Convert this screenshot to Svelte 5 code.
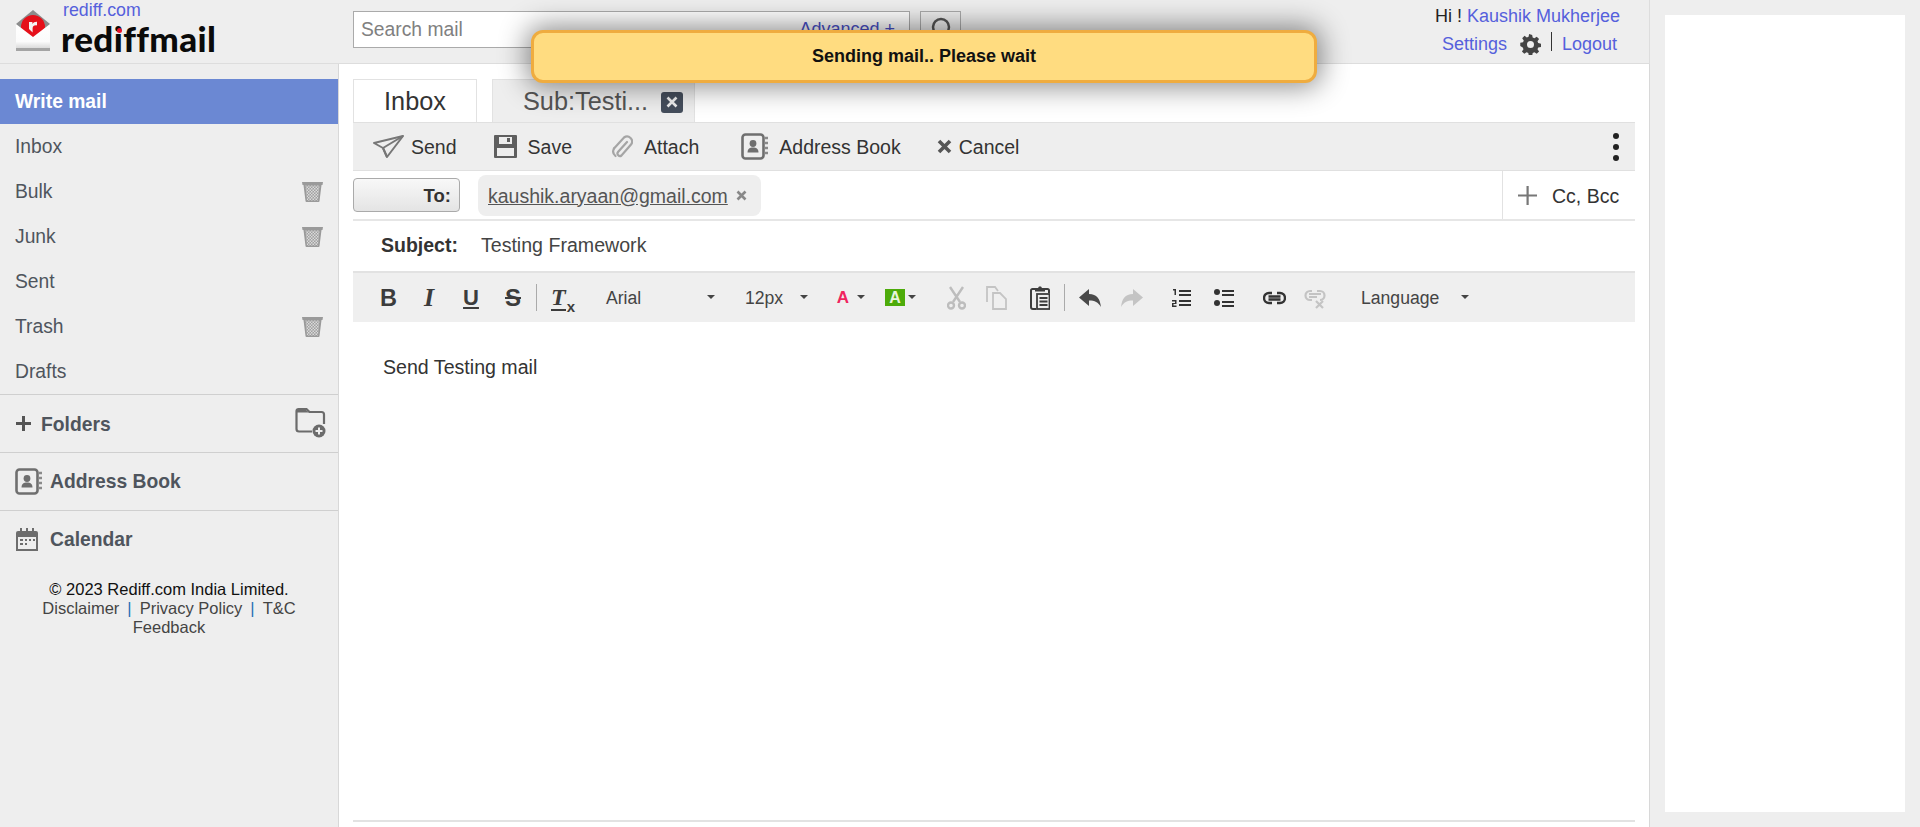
<script>
  const folders = [
    { name: 'Inbox', trash: false },
    { name: 'Bulk', trash: true },
    { name: 'Junk', trash: true },
    { name: 'Sent', trash: false },
    { name: 'Trash', trash: true },
    { name: 'Drafts', trash: false }
  ];
</script>

{#snippet bookIcon(w, h)}
  <svg width={w} height={h} viewBox="0 0 27 27" fill="none">
    <rect x="1.5" y="1.5" width="21" height="24" rx="3" stroke="#6f6f6f" stroke-width="2.6" fill="#eee"/>
    <circle cx="12" cy="10.5" r="3.4" fill="#6f6f6f"/>
    <path d="M6.5 19.5c0-4 2.5-5 5.5-5s5.500 1 5.500 5z" fill="#6f6f6f"/>
    <path d="M24 5h3M24 10h3M24 15h3M24 20h3" stroke="#8a8a8a" stroke-width="2.600"/>
  </svg>
{/snippet}

{#snippet trashIcon()}
  <svg class="trash" width="21" height="20" viewBox="0 0 21 20">
    <defs>
      <pattern id="mesh" width="3" height="3" patternUnits="userSpaceOnUse">
        <rect width="3" height="3" fill="#a0a0a0"/>
        <rect width="1.500" height="1.500" fill="#dadada"/>
        <rect x="1.500" y="1.500" width="1.500" height="1.500" fill="#dadada"/>
      </pattern>
    </defs>
    <path d="M0 0h21l-.5 3h-1L17.500 19a1 1 0 0 1-1 1H4.500a1 1 0 0 1-1-1L1.500 3h-1z" fill="#9a9a9a"/>
    <path d="M3.500 3.500h14L16 18.500H5z" fill="url(#mesh)"/>
  </svg>
{/snippet}

<div class="page">
  <div class="left">
    <header class="header">
      <div class="brand">
        <svg class="envelope" width="36" height="42" viewBox="0 0 36 42">
          <defs>
            <linearGradient id="env" x1="0" y1="0" x2="0" y2="1">
              <stop offset="0" stop-color="#ffffff"/>
              <stop offset="0.7" stop-color="#fbfbfb"/>
              <stop offset="1" stop-color="#d6d6d6"/>
            </linearGradient>
          </defs>
          <path d="M18 1L35 15v4H1v-4z" fill="#8c8c8c"/>
          <circle cx="18" cy="18" r="12" fill="#e5101a"/>
          <path d="M1 15l17 13 17-13v25H1z" fill="url(#env)"/>
          <path d="M14 13h3.400v2c1-1.600 2.400-2.300 4.600-2.200v3.600c-2.800-.3-4.400.6-4.400 3v4.100L14 20z" fill="#f4f4f4"/>
          <path d="M1 39h34v3H1z" fill="#a4a4a4"/>
        </svg>
        <div class="brand-text">
          <a class="rediff-link">rediff.com</a>
          <div class="logo-word">rediffmail<i class="logo-dot"></i></div>
        </div>
      </div>
      <div class="search">
        <div class="search-box">
          <span class="placeholder">Search mail</span>
          <a class="advanced">Advanced +</a>
        </div>
        <div class="search-btn">
          <svg width="26" height="26" viewBox="0 0 26 26" fill="none"><circle cx="13" cy="11" r="8" stroke="#555" stroke-width="2.500"/><path d="M8 19l-3 5" stroke="#555" stroke-width="3"/></svg>
        </div>
      </div>
      <div class="user">
        <div class="user-top">Hi ! <a>Kaushik Mukherjee</a></div>
        <div class="user-links">
          <a>Settings</a>
          <svg class="gear" width="21" height="21" viewBox="0 0 24 24"><path fill="#444" fill-rule="evenodd" d="M13.900 1l.6 3.100 2 .8 2.600-1.800 2.700 2.700-1.800 2.600.8 2 3.200.6v3.800l-3.200.6-.8 2 1.800 2.600-2.700 2.700-2.600-1.800-2 .8-.6 3.300h-3.800l-.6-3.300-2-.8-2.600 1.800-2.700-2.700 1.800-2.600-.8-2L.3 13.800V10l3.200-.6.800-2-1.800-2.600 2.700-2.700 2.600 1.800 2-.8.6-3.100zM12 8a4 4 0 1 0 0 8 4 4 0 0 0 0-8z"/></svg>
          <i class="pipe"></i>
          <a>Logout</a>
        </div>
      </div>
    </header>

    <div class="body">
      <aside class="sidebar">
        <div class="write">Write mail</div>
        {#each folders as f}
          <div class="row">
            <span>{f.name}</span>
            {#if f.trash}{@render trashIcon()}{/if}
          </div>
        {/each}
        <div class="section folders">
          <span class="sec-label">
            <svg class="plus" width="15" height="15" viewBox="0 0 15 15"><path d="M6 0h3v6h6v3H9v6H6V9H0V6h6z" fill="#555"/></svg>
            Folders
          </span>
          <svg width="31" height="31" viewBox="0 0 31 31" fill="none">
            <path d="M1.500 22V4a2 2 0 0 1 2-2h8l3 3h12a2.500 2.500 0 0 1 2.500 2.500V17M1.500 22a2.500 2.500 0 0 0 2.500 2.500h13" stroke="#6b6b6b" stroke-width="2.200"/>
            <path d="M2 3h9l3 2.500H2z" fill="#6b6b6b"/>
            <circle cx="24" cy="24" r="6.500" fill="#6b6b6b"/>
            <path d="M24 20.500v7M20.500 24h7" stroke="#eee" stroke-width="2"/>
          </svg>
        </div>
        <div class="section">
          <span class="sec-label gap11">
            {@render bookIcon(27, 27)}
            Address Book
          </span>
        </div>
        <div class="section">
          <span class="sec-label gap11">
            <svg class="cal" width="24" height="24" viewBox="0 0 24 24">
              <path d="M1 5a2 2 0 0 1 2-2h18a2 2 0 0 1 2 2v18H1z" fill="#6d6d6d"/>
              <rect x="3" y="9" width="18" height="12" fill="#eee"/>
              <path d="M5 0h2v5H5zM11 0h2v5h-2zM17 0h2v5h-2z" fill="#6d6d6d"/>
              <path d="M10 11h2v2h-2zM14 11h2v2h-2zM18 11h2v2h-2zM5 11h3v2H5zM5 15h3v2H5zM10 15h2v2h-2z" fill="#6d6d6d"/>
            </svg>
            Calendar
          </span>
        </div>
        <footer class="foot">
          <div class="copy-line">© 2023 Rediff.com India Limited.</div>
          <div><a>Disclaimer</a><b>|</b><a>Privacy Policy</a><b>|</b><a>T&amp;C</a></div>
          <div><a>Feedback</a></div>
        </footer>
      </aside>

      <main class="main">
        <div class="tabs">
          <div class="tab">Inbox</div>
          <div class="tab sub">
            Sub:Testi...
            <span class="tab-x">
              <svg width="12" height="12" viewBox="0 0 12 12"><path d="M1.500 1.500l9 9M10.500 1.500l-9 9" stroke="#eee" stroke-width="2.600"/></svg>
            </span>
          </div>
        </div>

        <div class="actions">
          <div class="act a-send">
            <svg width="31" height="23" viewBox="0 0 31 23" fill="none" stroke="#777" stroke-width="2" stroke-linejoin="round"><path d="M1 8L30 1 14 22 10 13z"/><path d="M10 13L30 1 M14 22l-4-9"/></svg>
            <span>Send</span>
          </div>
          <div class="act a-save">
            <svg width="23" height="23" viewBox="0 0 23 23"><path d="M0 1a1 1 0 0 1 1-1h21a1 1 0 0 1 1 1v21a1 1 0 0 1-1 1H1a1 1 0 0 1-1-1z" fill="#5f5f5f"/><rect x="5" y="2" width="13" height="7" fill="#eee"/><rect x="13" y="3" width="3" height="4" fill="#5f5f5f"/><rect x="3" y="13" width="17" height="8" fill="#eee"/></svg>
            <span>Save</span>
          </div>
          <div class="act a-attach">
            <svg width="22" height="24" viewBox="0 0 22 24" fill="none" stroke="#a5a5a5" stroke-width="2.200" stroke-linecap="round"><path d="M16 7L7 17a2.500 2.500 0 0 0 3.500 3.500L20 9.500a5 5 0 0 0-7-7L3 13.500"/><path d="M3 13.500a6 6 0 0 0 1.500 7.500"/></svg>
            <span>Attach</span>
          </div>
          <div class="act a-book">
            {@render bookIcon(27, 27)}
            <span>Address Book</span>
          </div>
          <div class="act a-cancel">
            <svg width="15" height="15" viewBox="0 0 15 15"><path d="M2 2l11 11M13 2L2 13" stroke="#555" stroke-width="3.600"/></svg>
            <span>Cancel</span>
          </div>
          <div class="kebab"><i></i><i></i><i></i></div>
        </div>

        <div class="to-row">
          <div class="to-btn">To:</div>
          <div class="chip"><u>kaushik.aryaan@gmail.com</u>
            <svg width="11" height="11" viewBox="0 0 11 11"><path d="M1.500 1.500l8 8M9.500 1.500l-8 8" stroke="#888" stroke-width="2.600"/></svg>
          </div>
          <div class="ccbcc">
            <svg width="19" height="19" viewBox="0 0 19 19"><path d="M8.500 0h2.200v8.400H19v2.200h-8.300V19H8.500v-8.400H0V8.400h8.500z" fill="#777"/></svg>
            <span>Cc, Bcc</span>
          </div>
        </div>

        <div class="subject-row">
          <b>Subject:</b>
          <span>Testing Framework</span>
        </div>

        <div class="format">
          <span class="g g-b">B</span>
          <span class="g g-i">I</span>
          <span class="g g-u">U</span>
          <span class="g g-s">S</span>
          <i class="fdiv d1"></i>
          <span class="g g-t"><span class="t-t">T</span><small>x</small></span>
          <div class="sel s-font"><span>Arial</span><i class="caret"></i></div>
          <div class="sel s-size"><span>12px</span><i class="caret"></i></div>
          <span class="g g-color">A</span><i class="caret c-a"></i>
          <span class="g g-bg">A</span><i class="caret c-b"></i>
          <svg class="ic-cut" width="19" height="24" viewBox="0 0 19 24" fill="none" stroke="#bdbdbd" stroke-width="2.400"><path d="M3 1l10 15M16 1L6 16"/><circle cx="4" cy="19.500" r="3"/><circle cx="15" cy="19.500" r="3"/></svg>
          <svg class="ic-copy" width="21" height="24" viewBox="0 0 21 24" fill="none" stroke="#c4c4c4" stroke-width="1.800"><path d="M1 16V1h8l3 4"/><path d="M7 7h7l6 6v10H7z"/></svg>
          <svg class="ic-paste" width="20" height="24" viewBox="0 0 20 24" fill="none"><path d="M5 3H2.500a1.500 1.500 0 0 0-1.500 1.500V21a2 2 0 0 0 2 2h3" stroke="#3d3d3d" stroke-width="2"/><path d="M15 3h2.500A1.500 1.500 0 0 1 19 4.500V7" stroke="#3d3d3d" stroke-width="2"/><path d="M5 2h3l1-1.500h2L12 2h3v3.500H5z" fill="#3d3d3d"/><rect x="7" y="8" width="12.500" height="15" fill="none" stroke="#3d3d3d" stroke-width="1.800"/><path d="M9.500 12h8M9.500 15.500h8M9.500 19h8" stroke="#3d3d3d" stroke-width="1.800"/></svg>
          <i class="fdiv d2"></i>
          <svg class="ic-undo" width="22" height="18" viewBox="0 0 22 18"><path d="M10 0v5c8 0 11 5 12 13-3-5-6-6.500-12-6.500V17L0 8.500z" fill="#4a4a4a"/></svg>
          <svg class="ic-redo" width="22" height="18" viewBox="0 0 22 18"><path d="M12 0v5C4 5 1 10 0 18c3-5 6-6.500 12-6.500V17l10-8.500z" fill="#c4c4c4"/></svg>
          <svg class="ic-ol" width="20" height="20" viewBox="0 0 20 20" fill="#333"><path d="M2 1h3v6H3.500V2.500H2zM1 12h4.500v4H2.500v1.500h3V19H1v-4h3v-1.500H1z"/><path d="M8 2h12v2H8zM8 6h12v2H8zM8 12h12v2H8zM8 16h12v2H8z"/></svg>
          <svg class="ic-ul" width="20" height="20" viewBox="0 0 20 20" fill="#333"><circle cx="3" cy="4" r="3"/><circle cx="3" cy="15" r="3"/><path d="M8 2h12v2H8zM8 6h12v2H8zM8 13h12v2H8zM8 17h12v2H8z"/></svg>
          <svg class="ic-link" width="23" height="14" viewBox="0 0 23 14" fill="none" stroke="#333" stroke-width="2.400"><path d="M9 2H6a5 5 0 0 0 0 10h3M14 2h3a5 5 0 0 1 0 10h-3"/><path d="M5.500 5.500h12M5.500 8.500h12"/></svg>
          <svg class="ic-unlink" width="22" height="20" viewBox="0 0 22 20" fill="none" stroke="#c4c4c4" stroke-width="2.200"><path d="M8 2H6a4.500 4.500 0 0 0 0 9h2M13 2h3a4.500 4.500 0 0 1 0 9"/><path d="M5 5h12M5 8h8"/><path d="M12 12l7 7M19 12l-7 7"/></svg>
          <div class="sel s-lang"><span>Language</span><i class="caret"></i></div>
        </div>

        <div class="editor">Send Testing mail</div>
        <div class="end-line"></div>
      </main>
    </div>
  </div>

  <aside class="ad"><div class="ad-box"></div></aside>

  <div class="toast">Sending mail.. Please wait</div>
</div>

<style>
  :global(body) { margin: 0; background: #fff; }
  .page {
    position: relative;
    display: flex;
    width: 1920px;
    height: 827px;
    overflow: hidden;
    font-family: "Liberation Sans", Arial, sans-serif;
    color: #333;
  }
  a { color: #5560dc; }

  .left { width: 1650px; display: flex; flex-direction: column; }

  .header {
    height: 64px;
    box-sizing: border-box;
    background: #eee;
    border-bottom: 1px solid #ddd;
    border-right: 1px solid #ddd;
    display: flex;
  }
  .brand { width: 353px; display: flex; flex-shrink: 0; padding: 9px 0 0 15px; box-sizing: border-box; }
  .envelope { flex-shrink: 0; }
  .brand-text { margin-left: 9px; margin-top: -9px; position: relative; }
  .rediff-link { display: block; font-size: 17.800px; line-height: 20px; padding-left: 3px; }
  .logo-word {
    position: relative;
    font-family: Lato, sans-serif;
    font-weight: 900;
    font-size: 35px;
    line-height: 36px;
    letter-spacing: 0.4px;
    font-variant-ligatures: none;
    color: #0a0a0a;
    white-space: nowrap;
    margin-left: 1px;
  }
  .logo-dot {
    position: absolute;
    left: 56px;
    top: 8px;
    width: 5px;
    height: 5px;
    border-radius: 50%;
    background: #e8132a;
  }

  .search { display: flex; padding-top: 11px; width: 1060px; flex-shrink: 0; }
  .search-box {
    width: 557px;
    height: 37px;
    box-sizing: border-box;
    border: 1px solid #aaa;
    background: #fff;
    display: flex;
    justify-content: space-between;
    align-items: center;
    padding: 0 14px 0 7px;
    font-size: 19.300px;
  }
  .placeholder { color: #808080; }
  .advanced { font-size: 18px; color: #4a50c8; }
  .search-btn {
    margin-left: 10px;
    width: 41px;
    height: 37px;
    box-sizing: border-box;
    border: 1px solid #aaa;
    display: flex;
    justify-content: center;
    padding-top: 4px;
  }
  .user { flex: 1; padding-top: 5px; text-align: right; padding-right: 29px; font-size: 18px; white-space: nowrap; }
  .user-top { line-height: 22px; color: #222; }
  .user-links { display: flex; justify-content: flex-end; align-items: center; margin-top: 5px; padding-right: 3px; height: 24px; }
  .gear { margin-left: 13px; }
  .pipe { width: 1px; height: 19px; background: #333; margin: -6px 10px 0 10px; }

  .body { flex: 1; display: flex; min-height: 0; }

  .sidebar {
    width: 339px;
    flex-shrink: 0;
    box-sizing: border-box;
    background: #eee;
    border-right: 1px solid #d8d8d8;
    padding-top: 15px;
    color: #4f555d;
    font-size: 19.300px;
  }
  .write {
    height: 45px;
    line-height: 45px;
    padding-left: 15px;
    background: #6b88d3;
    color: #fff;
    font-weight: 700;
  }
  .row {
    height: 45px;
    padding: 0 15px;
    display: flex;
    align-items: center;
    justify-content: space-between;
  }
  .section {
    height: 58px;
    box-sizing: border-box;
    border-top: 1px solid #cfcfcf;
    display: flex;
    align-items: center;
    justify-content: space-between;
    padding: 0 12px 0 15px;
    font-weight: 700;
  }
  .folders svg:last-child { margin-top: -3px; }
  .folders .sec-label { padding-top: 2px; }
  .sec-label { display: flex; align-items: center; gap: 10px; }
  .sec-label.gap11 { gap: 8px; }
  .cal { margin-right: 3px; }
  .plus { margin-left: 1px; }
  .foot { font-size: 16.500px; line-height: 19px; text-align: center; color: #111; padding: 12px 0 0 0; }
  .foot a { color: #444; }
  .foot b { font-weight: 400; color: #1e6db5; margin: 0 8px; }

  .main { flex: 1; box-sizing: border-box; padding: 15px 14px 0 14px; border-right: 1px solid #d8d8d8; position: relative; }
  .tabs { display: flex; height: 43px; box-sizing: border-box; }
  .tab {
    width: 124px;
    box-sizing: border-box;
    border: 1px solid #e2e2e2;
    border-bottom: 0;
    font-size: 25.300px;
    color: #333;
    text-align: center;
    line-height: 42px;
  }
  .tab.sub {
    width: 203px;
    margin-left: 15px;
    background: #eee;
    color: #555;
    text-align: left;
    padding-left: 30px;
    display: flex;
    align-items: center;
    gap: 13px;
  }
  .tab-x {
    width: 22px;
    height: 21px;
    border-radius: 3px;
    background: #454e5c;
    display: flex;
    align-items: center;
    justify-content: center;
    margin-top: 2px;
  }

  .actions {
    height: 49px;
    box-sizing: border-box;
    background: #eee;
    border-top: 1px solid #e0e0e0;
    border-bottom: 1px solid #e0e0e0;
    display: flex;
    align-items: center;
    padding-left: 20px;
    font-size: 19.500px;
  }
  .act { display: flex; align-items: center; color: #333; }
  .act span { padding-top: 2px; }
  .a-send span { margin-left: 7px; }
  .a-save { margin-left: 37px; }
  .a-save span { margin-left: 11px; }
  .a-attach { margin-left: 39px; }
  .a-attach span { margin-left: 11px; }
  .a-book { margin-left: 42px; }
  .a-book span { margin-left: 11px; }
  .a-cancel { margin-left: 36px; }
  .a-cancel span { margin-left: 7px; }
  .kebab { margin-left: auto; margin-right: 16px; display: flex; flex-direction: column; gap: 5px; }
  .kebab i { width: 6px; height: 6px; border-radius: 50%; background: #222; }

  .to-row {
    height: 50px;
    box-sizing: border-box;
    border-bottom: 2px solid #e6e6e6;
    display: flex;
    align-items: center;
    font-size: 19.500px;
  }
  .to-btn {
    width: 107px;
    height: 34px;
    box-sizing: border-box;
    border: 1px solid #aaa;
    border-radius: 4px;
    background: linear-gradient(#f8f8f8, #e4e4e4);
    font-weight: 700;
    font-size: 18.500px;
    line-height: 34px;
    text-align: right;
    padding-right: 8px;
    color: #333;
  }
  .chip {
    margin-left: 18px;
    height: 41px;
    width: 283px;
    box-sizing: border-box;
    border-radius: 8px;
    background: #eee;
    display: flex;
    align-items: center;
    gap: 8px;
    padding-left: 10px;
    color: #555;
  }
  .chip u { padding-top: 2px; }
  .ccbcc {
    margin-left: auto;
    height: 100%;
    width: 133px;
    box-sizing: border-box;
    border-left: 1px solid #e2e2e2;
    display: flex;
    align-items: center;
    padding-left: 15px;
    gap: 15px;
    font-size: 19.500px;
  }
  .ccbcc span { padding-top: 2px; }

  .subject-row {
    height: 50px;
    display: flex;
    align-items: center;
    font-size: 19.500px;
    padding-left: 28px;
    padding-bottom: 2px;
    box-sizing: border-box;
  }
  .subject-row span { margin-left: 23px; font-size: 19.600px; color: #444; }

  .format {
    height: 51px;
    box-sizing: border-box;
    background: #efefef;
    border-top: 2px solid #e2e2e2;
    display: flex;
    align-items: center;
    padding-left: 27px;
    font-size: 17.600px;
  }
  .g { display: inline-block; flex-shrink: 0; font-weight: 700; color: #3c3c3c; font-size: 23px; line-height: 26px; text-align: center; white-space: nowrap; }
  .g-b { width: 14px; font-size: 23.500px; }
  .g-i { width: 14px; margin-left: 28px; font-family: "Liberation Serif", serif; font-style: italic; font-size: 26px; }
  .g-u { width: 16px; margin-left: 27px; text-decoration: underline; font-size: 22px; }
  .g-s { width: 20px; margin-left: 24px; text-decoration: line-through; font-size: 24px; }
  .g-t { width: 20px; margin-left: 14px; text-align: left; display: inline-flex; align-items: flex-end; }
  .t-t { font-family: "Liberation Serif", serif; font-style: italic; font-size: 24px; line-height: 24px; border-bottom: 2px solid #3c3c3c; }
  .g-t small { font-size: 15px; line-height: 14px; margin-left: 1px; margin-bottom: -3px; }
  .fdiv { width: 1px; height: 27px; background: #aaa; }
  .d1 { margin-left: 13px; }
  .d2 { margin-left: 14px; }
  .sel { display: flex; align-items: center; justify-content: space-between; color: #444; }
  .sel span { padding-top: 2px; }
  .s-font { width: 109px; margin-left: 35px; }
  .s-size { width: 63px; margin-left: 30px; }
  .s-lang { width: 108px; margin-left: 35px; }
  .caret { width: 0; height: 0; border-left: 4px solid transparent; border-right: 4px solid transparent; border-top: 4px solid #444; display: block; margin-top: -2px; }
  .g-color { margin-left: 28px; width: 14px; color: #f0245f; font-size: 17px; }
  .c-a { margin-left: 7px; }
  .g-bg { margin-left: 20px; width: 20px; height: 17px; line-height: 17px; background: #4dab0a; color: #e8f5dc; font-size: 16px; }
  .c-b { margin-left: 3px; }
  .ic-cut { margin-left: 31px; }
  .ic-copy { margin-left: 20px; }
  .ic-paste { margin-left: 23px; }
  .ic-undo { margin-left: 14px; }
  .ic-redo { margin-left: 20px; }
  .ic-ol { margin-left: 28px; }
  .ic-ul { margin-left: 23px; }
  .ic-link { margin-left: 29px; }
  .ic-unlink { margin-left: 18px; margin-top: 3px; }

  .editor {
    height: 498px;
    box-sizing: border-box;
    padding: 34px 0 0 30px;
    font-size: 19.600px;
    line-height: 23px;
    color: #333;
  }
  .end-line { height: 2px; background: #e2e2e2; }

  .ad { width: 270px; box-sizing: border-box; background: #eee; padding: 15px; }
  .ad-box { width: 240px; height: 797px; background: #fff; }

  .toast {
    position: absolute;
    left: 531px;
    top: 30px;
    width: 786px;
    height: 53px;
    box-sizing: border-box;
    border: 3px solid #efac3f;
    border-radius: 12px;
    background: #ffdc80;
    box-shadow: 0 0 28px 4px rgba(0, 0, 0, 0.45);
    font-weight: 700;
    font-size: 18px;
    line-height: 47px;
    text-align: center;
    color: #111;
  }
</style>
